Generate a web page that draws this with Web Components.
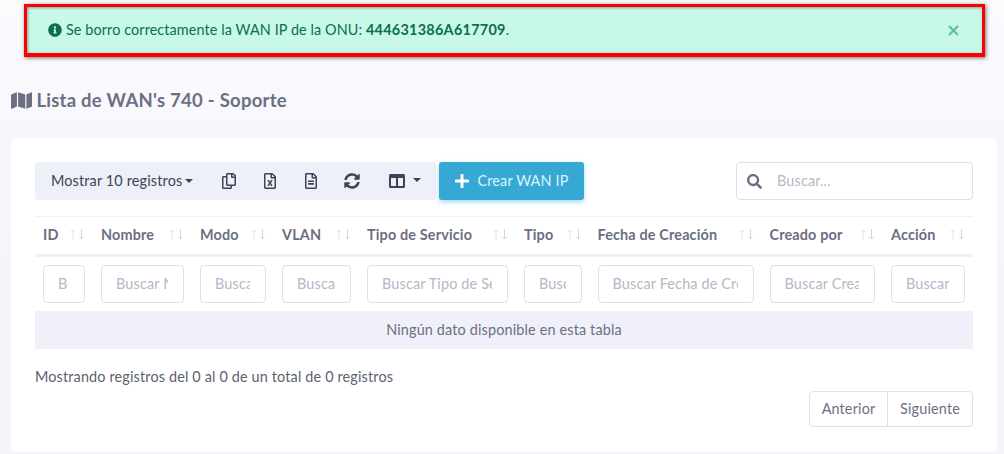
<!DOCTYPE html>
<html lang="es"><head><meta charset="utf-8"><title>Lista de WAN's</title>
<style>
html,body{margin:0;padding:0}
body{width:1004px;height:454px;overflow:hidden;background:linear-gradient(#fbfbfe 0,#f8f8fd 100px,#f6f6fb 140px,#f3f3f9 454px);font-family:Lato,"Noto Sans",sans-serif;font-size:14.4px;letter-spacing:.16px;color:#6b6f82}
</style></head><body>
<wan-page></wan-page>
<script>
const P={
info:[512,512,"M256 8C119.043 8 8 119.083 8 256c0 136.997 111.043 248 248 248s248-111.003 248-248C504 119.083 392.957 8 256 8zm0 110c23.196 0 42 18.804 42 42s-18.804 42-42 42-42-18.804-42-42 18.804-42 42-42zm56 254c0 6.627-5.373 12-12 12h-88c-6.627 0-12-5.373-12-12v-24c0-6.627 5.373-12 12-12h12v-64h-12c-6.627 0-12-5.373-12-12v-24c0-6.627 5.373-12 12-12h64c6.627 0 12 5.373 12 12v100h12c6.627 0 12 5.373 12 12v24z"],
map:[576,512,"M0 117.66v346.32c0 11.32 11.43 19.06 21.94 14.86L160 416V32L20.12 87.95A32.006 32.006 0 0 0 0 117.66zM192 416l192 64V96L192 32v384zM554.06 33.16L416 96v384l139.88-55.95A31.996 31.996 0 0 0 576 394.34V48.02c0-11.32-11.43-19.06-21.94-14.86z"],
search:[512,512,"M505 442.7L405.3 343c-4.5-4.5-10.6-7-17-7H372c27.6-35.3 44-79.7 44-128C416 93.1 322.9 0 208 0S0 93.1 0 208s93.1 208 208 208c48.3 0 92.7-16.4 128-44v16.3c0 6.4 2.5 12.5 7 17l99.7 99.7c9.4 9.4 24.6 9.4 33.9 0l28.3-28.3c9.4-9.4 9.4-24.6.1-34zM208 336c-70.7 0-128-57.2-128-128 0-70.7 57.2-128 128-128 70.7 0 128 57.2 128 128 0 70.7-57.2 128-128 128z"],
copy:[448,512,"M433.941 65.941l-51.882-51.882A48 48 0 0 0 348.118 0H176c-26.51 0-48 21.49-48 48v48H48c-26.51 0-48 21.49-48 48v320c0 26.51 21.49 48 48 48h224c26.51 0 48-21.49 48-48v-48h80c26.51 0 48-21.49 48-48V99.882a48 48 0 0 0-14.059-33.941zM266 464H54a6 6 0 0 1-6-6V150a6 6 0 0 1 6-6h74v224c0 26.51 21.49 48 48 48h96v42a6 6 0 0 1-6 6zm128-96H182a6 6 0 0 1-6-6V54a6 6 0 0 1 6-6h106v88c0 13.255 10.745 24 24 24h88v202a6 6 0 0 1-6 6zm6-256h-64V48h9.632c1.591 0 3.117.632 4.243 1.757l48.368 48.368a6 6 0 0 1 1.757 4.243V112z"],
excel:[384,512,"M369.9 97.9L286 14C277 5 264.8-.1 252.1-.1H48C21.5 0 0 21.5 0 48v416c0 26.5 21.5 48 48 48h288c26.5 0 48-21.5 48-48V131.9c0-12.7-5.1-25-14.1-34zM332.1 128H256V51.9l76.1 76.1zM48 464V48h160v104c0 13.3 10.7 24 24 24h104v288H48zm212-240h-28.8c-4.4 0-8.4 2.4-10.5 6.3-18 33.1-22.2 42.4-28.6 57.7-13.9-29.1-6.9-17.3-28.6-57.7-2.1-3.9-6.2-6.3-10.6-6.3H124c-9.3 0-15 10-10.4 18l46.3 78-46.3 78c-4.7 8 1.1 18 10.4 18h28.9c4.4 0 8.4-2.4 10.5-6.3 21.7-40 23-45 28.6-57.7 14.9 30.2 5.9 15.9 28.6 57.7 2.1 3.9 6.2 6.3 10.6 6.3H260c9.3 0 15-10 10.4-18L224 320c.7-1.1 30.3-50.5 46.3-78 4.7-8-1.1-18-10.3-18z"],
file:[384,512,"M288 248v28c0 6.6-5.4 12-12 12H108c-6.6 0-12-5.4-12-12v-28c0-6.6 5.4-12 12-12h168c6.6 0 12 5.4 12 12zm-12 72H108c-6.6 0-12 5.4-12 12v28c0 6.6 5.4 12 12 12h168c6.6 0 12-5.4 12-12v-28c0-6.6-5.4-12-12-12zm108-188.1V464c0 26.5-21.5 48-48 48H48c-26.5 0-48-21.5-48-48V48C0 21.5 21.5 0 48 0h204.1C264.8 0 277 5.1 286 14.1L369.9 98c9 8.9 14.1 21.2 14.1 33.9zm-128-80V128h76.1L256 51.9zM336 464V176H232c-13.3 0-24-10.7-24-24V48H48v416h288z"],
sync:[512,512,"M370.72 133.28C339.458 104.008 298.888 87.962 255.848 88c-77.458.068-144.328 53.178-162.791 126.85-1.344 5.363-6.122 9.15-11.651 9.15H24.103c-7.498 0-13.194-6.807-11.807-14.176C33.933 94.924 134.813 8 256 8c66.448 0 126.791 26.136 171.315 68.685L463.03 40.97C478.149 25.851 504 36.559 504 57.941V192c0 13.255-10.745 24-24 24H345.941c-21.382 0-32.09-25.851-16.971-40.971l41.75-41.749zM32 296h134.059c21.382 0 32.09 25.851 16.971 40.971l-41.75 41.75c31.262 29.273 71.835 45.319 114.876 45.28 77.418-.07 144.315-53.144 162.787-126.849 1.344-5.363 6.122-9.15 11.651-9.15h57.304c7.498 0 13.194 6.807 11.807 14.176C478.067 417.076 377.187 504 256 504c-66.448 0-126.791-26.136-171.315-68.685L48.97 471.03C33.851 486.149 8 475.441 8 454.059V320c0-13.255 10.745-24 24-24z"],
columns:[512,512,"M464 32H48C21.49 32 0 53.49 0 80v352c0 26.51 21.49 48 48 48h416c26.51 0 48-21.49 48-48V80c0-26.51-21.49-48-48-48zM224 416H64V160h160v256zm224 0H288V160h160v256z"],
plus:[448,512,"M416 208H272V64c0-17.67-14.33-32-32-32h-32c-17.67 0-32 14.33-32 32v144H32c-17.67 0-32 14.33-32 32v32c0 17.67 14.33 32 32 32h144v144c0 17.67 14.33 32 32 32h32c17.67 0 32-14.33 32-32V304h144c17.67 0 32-14.33 32-32v-32c0-17.67-14.33-32-32-32z"]
};
class FaIcon extends HTMLElement{
  connectedCallback(){
    const [w,h,d]=P[this.getAttribute('name')];
    const s=this.getAttribute('size')||14;
    this.attachShadow({mode:'open'}).innerHTML=`<style>:host{display:inline-flex;line-height:0;flex:none}svg{display:block;height:${s}px;width:auto;fill:currentColor}</style><svg viewBox="0 0 ${w} ${h}" aria-hidden="true"><path d="${d}"/></svg>`;
  }
}
customElements.define('fa-icon',FaIcon);

class AlertBox extends HTMLElement{
  constructor(){super();this.attachShadow({mode:'open'}).innerHTML=`<style>
  :host{display:flex;align-items:center;box-sizing:border-box;height:53px;margin:4px 19px 0 24px;padding:0 23px 1px 21px;border:3px solid #f00;border-bottom-width:4px;background:#c8f8e8;color:#08704f;letter-spacing:.1px;box-shadow:1px 1px 4px rgba(0,0,0,.55),inset 1px 1px 3px rgba(0,0,0,.35)}
  .msg{flex:1;display:flex;align-items:center;gap:4px;white-space:pre}
  ::slotted(b){font-weight:700;letter-spacing:.28px}
  svg.x{display:block;width:11px;height:11px;margin-top:2px;stroke:#5dbf9f;stroke-width:2.1;fill:none}
  </style><div class="msg"><fa-icon name="info" size="14"></fa-icon><span><slot></slot></span></div><svg class="x" viewBox="0 0 11 11" aria-hidden="true"><path d="M1 1l9 9M10 1l-9 9"/></svg>`}
}
customElements.define('alert-box',AlertBox);

class SearchInput extends HTMLElement{
  constructor(){super();this.attachShadow({mode:'open'}).innerHTML=`<style>
  :host{display:flex;align-items:center;box-sizing:border-box;width:237px;height:38px;border:1px solid #dcdfe8;border-radius:4px;background:#fff;padding:0 12px 0 10px;gap:15px;color:#6b6f82}
  input{flex:1;min-width:0;border:0;outline:0;background:none;font:inherit;letter-spacing:inherit;padding:0 0 2px}
  input::placeholder{color:#b5b8c6;opacity:1}
  </style><fa-icon name="search" size="15"></fa-icon><input placeholder="Buscar...">`}
}
customElements.define('search-input',SearchInput);

class DataToolbar extends HTMLElement{
  constructor(){super();this.attachShadow({mode:'open'}).innerHTML=`<style>
  :host{display:flex;align-items:center;height:38px}
  .group{display:flex;align-items:center;height:38px;width:401px;flex:none;background:#edf0f8;border-radius:3px;color:#3f4353;box-sizing:border-box;padding-left:16px}
  .len{white-space:pre;width:157px;display:flex;align-items:center;gap:3px;padding-bottom:2px;box-sizing:border-box}
  .car{width:0;height:0;border-left:4px solid transparent;border-right:4px solid transparent;border-top:4px solid #3f4353;display:inline-block;margin-top:2px}
  .ic{display:flex;justify-content:center;align-items:center;flex:none;width:41px}
  .ic.cols{width:64px;justify-content:flex-start;padding-left:17px;gap:8px;box-sizing:border-box}
  .ic.cols .car{margin-top:-2px}
  .add{display:flex;align-items:center;justify-content:center;gap:9px;margin-left:3px;width:145px;height:38px;flex:none;background:#35a9d4;color:#dff3fa;border-radius:3px;box-shadow:0 2px 5px rgba(53,169,212,.45);white-space:pre;box-sizing:border-box}
  .add span{padding-bottom:2px}
  .add fa-icon{color:#fff}
  .sp{flex:1}
  </style>
  <div class="group"><span class="len">Mostrar 10 registros<i class="car"></i></span>
  <span class="ic"><fa-icon name="copy" size="16"></fa-icon></span>
  <span class="ic"><fa-icon name="excel" size="16"></fa-icon></span>
  <span class="ic"><fa-icon name="file" size="16"></fa-icon></span>
  <span class="ic"><fa-icon name="sync" size="16"></fa-icon></span>
  <span class="ic cols"><fa-icon name="columns" size="16"></fa-icon><i class="car"></i></span></div>
  <div class="add"><fa-icon name="plus" size="16"></fa-icon><span>Crear WAN IP</span></div>
  <span class="sp"></span><search-input></search-input>`}
}
customElements.define('data-toolbar',DataToolbar);

const COLS=[['ID','B',58],['Nombre','Buscar Nombre',99],['Modo','Buscar Modo',82],['VLAN','Buscar VLAN',85],['Tipo de Servicio','Buscar Tipo de Servicio',157],['Tipo','Buscar Tipo',73.5],['Fecha de Creación','Buscar Fecha de Creación',172],['Creado por','Buscar Creado por',121.5],['Acción','Buscar Acción',90]];
class DataGrid extends HTMLElement{
  constructor(){super();
  const tpl=COLS.map(c=>c[2]+'px').join(' ');
  this.attachShadow({mode:'open'}).innerHTML=`<style>
  :host{display:block;margin-top:16px}
  .row{display:grid;grid-template-columns:${tpl}}
  .head{height:37px;border-top:1px solid #eff0f8;border-bottom:3px solid #eff0f8;align-items:center}
  .th{display:flex;align-items:center;justify-content:space-between;padding:0 9px 0 8px;font-weight:700;color:#6b6f82;white-space:pre}
  .th span{padding-bottom:3px}
  .ar{flex:none;width:14px;height:11px;margin-top:-2px}
  .filters{height:54px;align-items:center}
  .td{padding:0 8px}
  input{box-sizing:border-box;display:block;width:100%;height:38px;border:1px solid #dfe1e9;border-radius:4px;background:#fff;padding:0 15px 2px 14px;font:inherit;letter-spacing:inherit;outline:0;min-width:0}
  input::placeholder{color:#b5b8c6;opacity:1}
  .empty{height:38px;background:#f0f0fa;display:flex;align-items:center;justify-content:center;color:#6b6f82;padding-bottom:2px;box-sizing:border-box}
  </style>
  <div class="row head">${COLS.map(c=>`<div class="th"><span>${c[0]}</span><svg class="ar" viewBox="0 0 14 11" aria-hidden="true"><path d="M3 11V1M.8 3.2L3 1l2.2 2.2" fill="none" stroke="#e2e4eb"/><path d="M11.5 0v10M9.3 7.8l2.2 2.2 2.2-2.2" fill="none" stroke="#d3d5de"/></svg></div>`).join('')}</div>
  <div class="row filters">${COLS.map(c=>`<div class="td"><input placeholder="${c[1]}"></div>`).join('')}</div>
  <div class="empty">Ningún dato disponible en esta tabla</div>`}
}
customElements.define('data-grid',DataGrid);

class TableFooter extends HTMLElement{
  constructor(){super();this.attachShadow({mode:'open'}).innerHTML=`<style>
  :host{display:block}
  .info{margin-top:18px;height:20px;line-height:20px;color:#5d6170}
  .pager{display:flex;justify-content:flex-end;margin-top:4px}
  .pg{display:flex;height:36px;box-sizing:border-box;border:1px solid #dfe1e9;border-radius:4px;background:#fff;color:#6b6f82}
  .pg span{display:flex;align-items:center;justify-content:center;padding-bottom:2px;box-sizing:border-box}
  .pg span+span{border-left:1px solid #dfe1e9}
  </style><div class="info">Mostrando registros del 0 al 0 de un total de 0 registros</div>
  <div class="pager"><div class="pg"><span style="width:77px">Anterior</span><span style="width:85px">Siguiente</span></div></div>`}
}
customElements.define('table-footer',TableFooter);

class WanPage extends HTMLElement{
  constructor(){super();this.attachShadow({mode:'open'}).innerHTML=`<style>
  :host{display:block}
  h1{margin:33px 0 0 11px;height:20px;display:flex;align-items:center;gap:4px;font-size:18.5px;letter-spacing:.25px;font-weight:700;color:#6b6f82;white-space:pre}
  .card{margin:28px 7px 0 11px;background:#fff;border-radius:5px;padding:24px;height:314px;box-sizing:border-box}
  </style>
  <alert-box>Se borro correctamente la WAN IP de la ONU: <b>444631386A617709</b>.</alert-box>
  <h1><fa-icon name="map" size="19"></fa-icon><span>Lista de WAN's 740 - Soporte</span></h1>
  <section class="card"><data-toolbar></data-toolbar><data-grid></data-grid><table-footer></table-footer></section>`}
}
customElements.define('wan-page',WanPage);
</script>
</body></html>
